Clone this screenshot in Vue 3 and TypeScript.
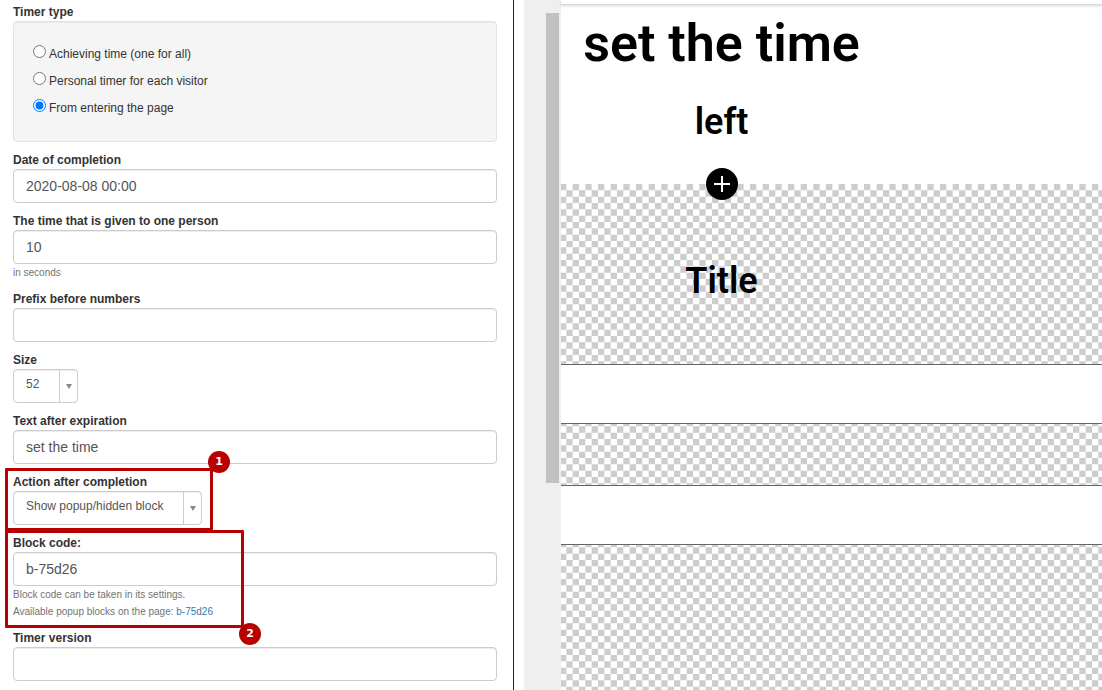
<script setup lang="ts">
import { ref } from 'vue'

const timerType = ref('page')
const timerTypes = [
  { value: 'all', label: 'Achieving time (one for all)' },
  { value: 'personal', label: 'Personal timer for each visitor' },
  { value: 'page', label: 'From entering the page' },
]
const date = ref('2020-08-08 00:00')
const seconds = ref('10')
const prefix = ref('')
const size = ref('52')
const expired = ref('set the time')
const action = ref('popup')
const code = ref('b-75d26')
const version = ref('')

// Cells of a 6 by 6 chequered tile, filled where row and column have the same parity.
const cells = Array.from({ length: 36 }, (_, i) => [i % 6, Math.floor(i / 6)])
  .filter(([x, y]) => (x + y) % 2 === 0)
  .map(([x, y]) => `M${x} ${y}h1v1h-1z`)
  .join('')
</script>

<template>
  <div class="editor">
    <form class="settings" @submit.prevent>
      <fieldset class="field types">
        <legend>Timer type</legend>
        <div class="well">
          <label v-for="t in timerTypes" :key="t.value" class="choice">
            <input v-model="timerType" type="radio" name="timer-type" :value="t.value" />
            <span>{{ t.label }}</span>
          </label>
        </div>
      </fieldset>
      <div class="field">
        <label for="date">Date of completion</label>
        <input id="date" v-model="date" class="control" type="text" />
      </div>
      <div class="field">
        <label for="seconds">The time that is given to one person</label>
        <input id="seconds" v-model="seconds" class="control" type="text" />
        <p class="help">in seconds</p>
      </div>
      <div class="field">
        <label for="prefix">Prefix before numbers</label>
        <input id="prefix" v-model="prefix" class="control" type="text" />
      </div>
      <div class="field">
        <label for="size">Size</label>
        <div class="picker small">
          <select id="size" v-model="size"><option value="52">52</option></select>
          <span class="arrow"><svg width="6" height="5" viewBox="0 0 6 5"><path d="M0 0h6L3 5z" /></svg></span>
        </div>
      </div>
      <div class="field">
        <label for="expired">Text after expiration</label>
        <input id="expired" v-model="expired" class="control" type="text" />
      </div>
      <div class="field marked first">
        <label for="action">Action after completion</label>
        <div class="picker wide">
          <select id="action" v-model="action"><option value="popup">Show popup/hidden block</option></select>
          <span class="arrow"><svg width="6" height="5" viewBox="0 0 6 5"><path d="M0 0h6L3 5z" /></svg></span>
        </div>
        <div class="outline"><span class="badge">1</span></div>
      </div>
      <div class="field marked second">
        <label for="code">Block code:</label>
        <input id="code" v-model="code" class="control" type="text" />
        <p class="help">Block code can be taken in its settings.</p>
        <p class="help">Available popup blocks on the page: <a href="#b-75d26">b-75d26</a></p>
        <div class="outline"><span class="badge">2</span></div>
      </div>
      <div class="field">
        <label for="version">Timer version</label>
        <input id="version" v-model="version" class="control" type="text" />
      </div>
    </form>

    <div class="gutter"><div class="thumb"></div></div>

    <main class="preview">
      <svg class="defs" width="0" height="0" aria-hidden="true">
        <pattern id="tile" x="-1" y="0" width="38" height="38" viewBox="0 0 6 6" patternUnits="userSpaceOnUse">
          <path :d="cells" fill="#cdcdcd" />
        </pattern>
        <pattern id="tile-cut" x="-1" y="-4" width="38" height="38" viewBox="0 0 6 6" patternUnits="userSpaceOnUse">
          <path :d="cells" fill="#cdcdcd" />
        </pattern>
      </svg>
      <div class="topbar"></div>
      <section class="block timer">
        <div class="column">
          <h1>set the time</h1>
          <h2>left</h2>
        </div>
      </section>
      <section class="block title">
        <svg class="checker" aria-hidden="true"><rect width="100%" height="100%" fill="url(#tile)" /></svg>
        <button class="add" type="button" aria-label="Add block">
          <svg width="32" height="32" viewBox="0 0 32 32"><path d="M16 8v16M8 16h16" /></svg>
        </button>
        <div class="column"><h2>Title</h2></div>
      </section>
      <section class="block strip"></section>
      <section class="block gap">
        <svg class="checker" aria-hidden="true"><rect width="100%" height="100%" fill="url(#tile-cut)" /></svg>
      </section>
      <section class="block strip"></section>
      <section class="block rest">
        <svg class="checker" aria-hidden="true"><rect width="100%" height="100%" fill="url(#tile-cut)" /></svg>
      </section>
    </main>
  </div>
</template>

<style>
body {
  margin: 0;
  background: #fff;
  overflow: hidden;
}
</style>

<style scoped>
* {
  box-sizing: border-box;
}
.editor {
  display: grid;
  grid-template-columns: 514px 47px minmax(0, 1fr);
  height: 100vh;
  overflow: hidden;
  font-family: "Liberation Sans", Arial, sans-serif;
  font-size: 12px;
  line-height: 17px;
  color: #333;
}
.settings {
  padding: 4px 16px 0 13px;
  border-right: 1px solid #222;
}
.field {
  position: relative;
  margin: 0 0 10px;
  padding: 0;
  border: 0;
  min-width: 0;
}
.field > label,
legend {
  display: block;
  padding: 0;
  font-weight: 700;
  line-height: 17px;
}
.well {
  display: flex;
  flex-direction: column;
  gap: 9px;
  height: 121px;
  padding: 23px 19px;
  border: 1px solid #e3e3e3;
  border-radius: 4px;
  background: #f5f5f5;
  box-shadow: inset 0 1px 1px rgba(0, 0, 0, 0.05);
}
.choice {
  display: flex;
  align-items: flex-start;
  gap: 3px;
}
.choice input {
  width: 13px;
  height: 13px;
  margin: 0;
}
.choice span {
  padding-top: 1px;
}
.control,
.picker {
  display: block;
  height: 34px;
  border: 1px solid #ccc;
  border-radius: 4px;
  background: #fff;
  box-shadow: inset 0 1px 1px rgba(0, 0, 0, 0.075);
  color: #555;
}
.control {
  width: 100%;
  padding: 6px 12px;
  font: 14px/20px "Liberation Sans", Arial, sans-serif;
}
.picker {
  display: flex;
}
.small {
  width: 65px;
}
.wide {
  width: 189px;
}
select {
  appearance: none;
  flex: 1;
  min-width: 0;
  padding: 0 0 4px 12px;
  border: 0;
  background: transparent;
  font: 12px/17px "Liberation Sans", Arial, sans-serif;
  color: #555;
}
.arrow {
  display: flex;
  align-items: center;
  justify-content: center;
  width: 18px;
  border-left: 1px solid #ccc;
  fill: #888;
}
.help {
  margin: 0;
  font-size: 10px;
  line-height: 17px;
  color: #737373;
}
a {
  color: #337ab7;
  text-decoration: none;
}
.outline {
  position: absolute;
  border: 3px solid #b80000;
  border-radius: 1px;
  pointer-events: none;
}
.first .outline {
  top: -6px;
  left: -8px;
  width: 208px;
  height: 63px;
}
.second .outline {
  top: -5px;
  left: -8px;
  width: 239px;
  height: 98px;
}
.badge {
  position: absolute;
  width: 22px;
  height: 22px;
  border-radius: 50%;
  background: #b80000;
  color: #fff;
  font: 700 11px/22px "DejaVu Sans", "Open Sans", sans-serif;
  text-align: center;
}
.first .badge {
  top: -20px;
  right: -20px;
}
.second .badge {
  right: -20px;
  bottom: -20px;
}
.gutter {
  margin-left: 10px;
  padding: 13px 2px 0 22px;
  background: #efefef;
}
.thumb {
  height: 470px;
  background: #c1c1c1;
}
.preview {
  display: flex;
  flex-direction: column;
  min-width: 0;
  font-family: Roboto, sans-serif;
  color: #000;
}
.defs {
  position: absolute;
}
.topbar {
  flex: none;
  height: 5px;
  border-bottom: 1px solid #d8d8d8;
  box-shadow: 0 1px 3px rgba(0, 0, 0, 0.15);
}
.block {
  position: relative;
  flex: none;
}
.column {
  position: relative;
  width: 321px;
  text-align: center;
}
h1,
h2 {
  margin: 0;
  font-weight: 600;
}
h1 {
  padding-top: 8px;
  font-size: 52px;
  line-height: 62px;
}
h2 {
  font-size: 36px;
  line-height: 42px;
}
.timer {
  height: 179px;
}
.timer h2 {
  padding-top: 26px;
}
.checker {
  position: absolute;
  inset: 0;
  width: 100%;
  height: 100%;
}
.title {
  height: 180px;
  padding-top: 76px;
}
.add {
  position: absolute;
  top: -16px;
  left: 145px;
  width: 32px;
  height: 32px;
  padding: 0;
  border: 0;
  border-radius: 50%;
  background: #000;
}
.add svg {
  display: block;
  fill: none;
  stroke: #fff;
  stroke-width: 2;
}
.strip {
  height: 60px;
  border: solid #666;
  border-width: 1px 0;
  background: #fff;
}
.gap {
  height: 61px;
}
.rest {
  flex: 1;
}
</style>
